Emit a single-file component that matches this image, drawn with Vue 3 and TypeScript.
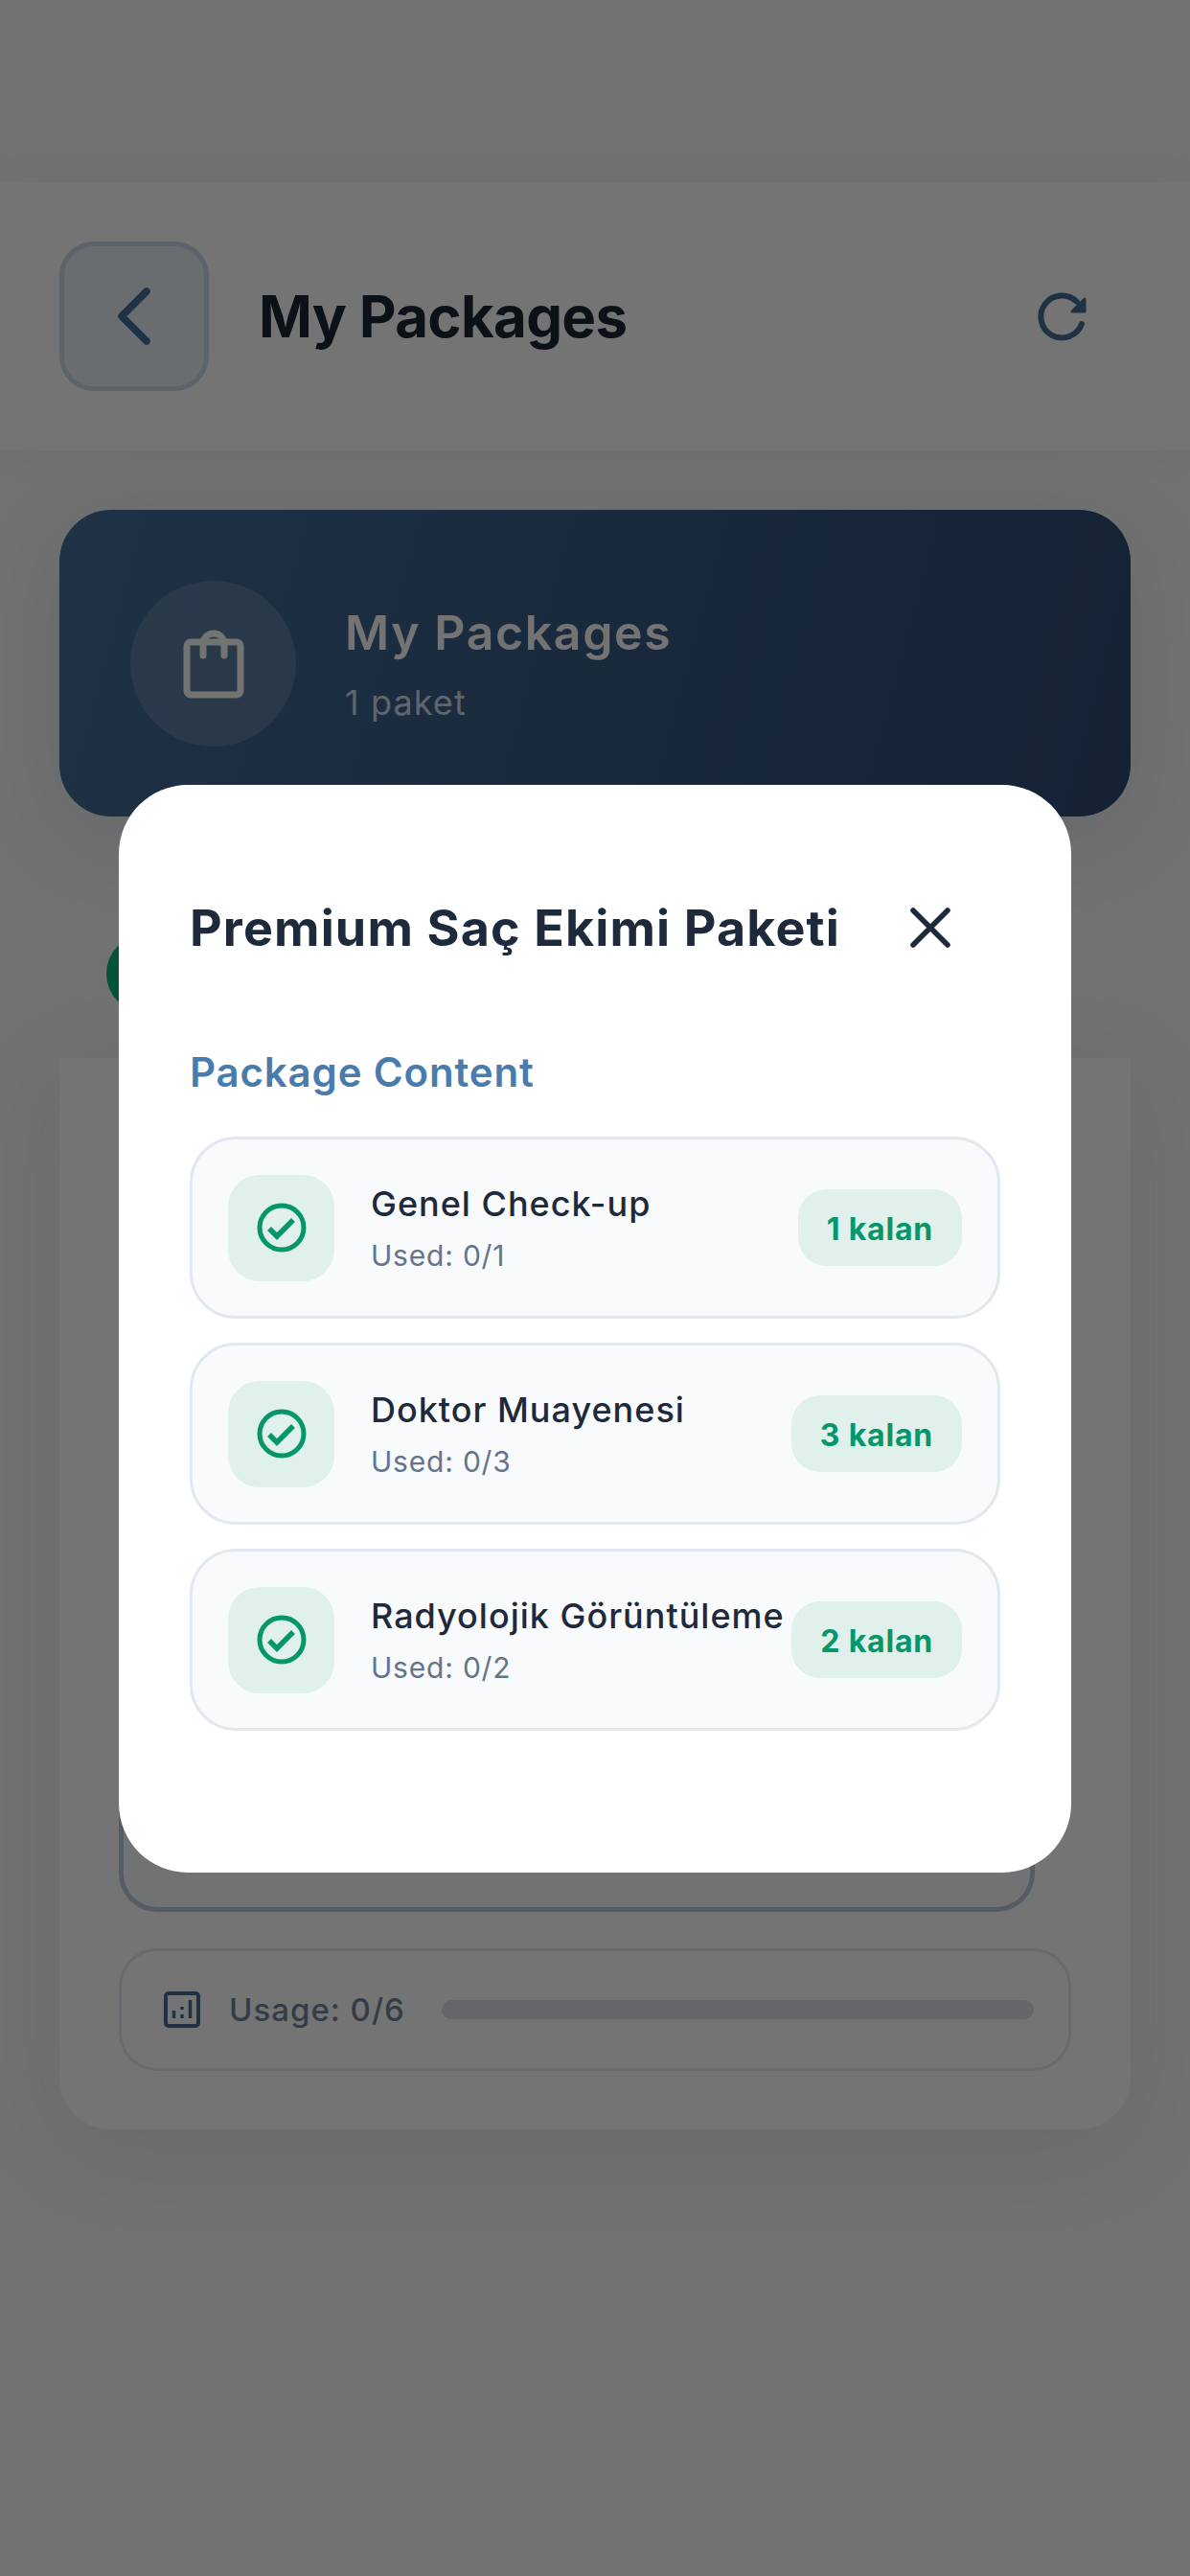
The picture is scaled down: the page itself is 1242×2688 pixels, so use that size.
<script setup lang="ts">
interface PackageItem {
  name: string;
  used: string;
  left: string;
}

const items: PackageItem[] = [
  { name: "Genel Check-up", used: "Used: 0/1", left: "1 kalan" },
  { name: "Doktor Muayenesi", used: "Used: 0/3", left: "3 kalan" },
  { name: "Radyolojik Görüntüleme", used: "Used: 0/2", left: "2 kalan" },
];
</script>

<template>
  <div class="page">
    <header class="top-bar">
      <button class="back-btn">
        <svg width="60" height="80" viewBox="0 0 60 80" fill="none">
          <path d="M43 14 17 40 43 66" stroke="#3c628a" stroke-width="7.5" stroke-linecap="round" stroke-linejoin="round" />
        </svg>
      </button>
      <h1 class="top-title">My Packages</h1>
      <svg class="refresh" width="60" height="60" viewBox="0 0 60 60" fill="none">
        <path d="M46 15A22 22 0 1 0 51 38" stroke="#3c628a" stroke-width="6" stroke-linecap="round" />
        <path d="M54 12V25H41Z" fill="#3c628a" stroke="#3c628a" stroke-width="3" stroke-linejoin="round" />
      </svg>
    </header>

    <main class="content">
      <section class="hero">
        <div class="hero-icon">
          <svg width="70" height="80" viewBox="0 0 70 80" fill="none" stroke="#e6e6e6" stroke-width="7" stroke-linecap="round" stroke-linejoin="round">
            <rect x="7" y="18" width="56" height="55" rx="4" />
            <path d="M24 32V20A11 11 0 0 1 46 20V32" />
          </svg>
        </div>
        <div>
          <div class="hero-title">My Packages</div>
          <div class="hero-sub">1 paket</div>
        </div>
      </section>

      <div class="status-row">
        <span class="status-dot"></span>
      </div>

      <section class="package-card">
        <div class="inner-box"></div>
        <div class="usage">
          <svg width="38" height="38" viewBox="0 0 38 38" fill="none">
            <rect x="2" y="2" width="34" height="34" rx="3" stroke="#3c628a" stroke-width="4" />
            <path d="M10.5 28V20M19 28V24M19 19V16M27.500 28V9" stroke="#3c628a" stroke-width="3.500" />
          </svg>
          <span class="usage-label">Usage: 0/6</span>
          <div class="usage-track"></div>
        </div>
      </section>
    </main>

    <div class="overlay">
      <div class="modal">
        <div class="modal-head">
          <h2 class="modal-title">Premium Saç Ekimi Paketi</h2>
          <svg class="close" width="46" height="46" viewBox="0 0 46 46" fill="none">
            <path d="M5 5 41 41M41 5 5 41" stroke="#1e293b" stroke-width="5.500" stroke-linecap="round" />
          </svg>
        </div>
        <h3 class="section-title">Package Content</h3>
        <ul class="item-list">
          <li v-for="item in items" :key="item.name" class="item">
            <div class="item-icon">
              <svg width="52" height="52" viewBox="0 0 52 52" fill="none" stroke="#059669" stroke-width="5">
                <circle cx="26" cy="26" r="23" />
                <path d="M13 27 21 35 38 18" stroke-width="5.500" />
              </svg>
            </div>
            <div class="item-text">
              <div class="item-name">{{ item.name }}</div>
              <div class="item-used">{{ item.used }}</div>
            </div>
            <span class="badge">{{ item.left }}</span>
          </li>
        </ul>
      </div>
    </div>
  </div>
</template>

<style scoped>
.page {
  position: relative;
  width: 1242px;
  height: 2688px;
  overflow: hidden;
  background: #e4e4e4;
  font-family: Inter, "Noto Sans", sans-serif;
}

.top-bar {
  display: flex;
  align-items: center;
  height: 280px;
  margin-top: 190px;
  padding: 0 77px 0 62px;
  box-sizing: border-box;
  background: #e8e8e8;
  box-shadow: 0 0 40px rgba(30, 58, 95, 0.05);
}

.back-btn {
  display: flex;
  align-items: center;
  justify-content: center;
  width: 156px;
  height: 156px;
  padding: 0;
  box-sizing: border-box;
  border: 5px solid #b8c6d4;
  border-radius: 36px;
  background: #d4dae0;
}

.top-title {
  flex: 1;
  margin: 0 0 0 52px;
  font-size: 60px;
  font-weight: 700;
  letter-spacing: -0.7px;
  color: #18202f;
}

.refresh {
  margin-right: 27px;
}

.content {
  padding: 62px 62px 0;
}

.hero {
  display: flex;
  align-items: center;
  gap: 51px;
  height: 320px;
  padding: 0 74px;
  box-sizing: border-box;
  border-radius: 54px;
  background: linear-gradient(105deg, #3e648c, #284468);
  box-shadow: 0 20px 90px rgba(30, 58, 95, 0.12);
}

.hero-icon {
  display: flex;
  align-items: center;
  justify-content: center;
  width: 173px;
  height: 173px;
  border-radius: 50%;
  background: rgba(255, 255, 255, 0.13);
}

.hero-title {
  font-size: 50px;
  font-weight: 600;
  letter-spacing: 1.6px;
  color: #e6e6e6;
}

.hero-sub {
  margin-top: 21px;
  font-size: 36px;
  letter-spacing: 1.1px;
  color: rgba(255, 255, 255, 0.7);
}

.status-row {
  display: flex;
  align-items: center;
  height: 252px;
  padding-left: 49px;
}

.status-dot {
  width: 82px;
  height: 82px;
  margin-top: 76px;
  border-radius: 50%;
  background: #0aa873;
}

.package-card {
  display: flex;
  flex-direction: column;
  height: 1118px;
  padding: 0 62px 61px;
  box-sizing: border-box;
  border-radius: 0 0 54px 54px;
  background: #e8e8e8;
  box-shadow: 0 20px 100px rgba(30, 58, 95, 0.1);
}

.inner-box {
  flex: 1;
  margin-right: 38px;
  margin-bottom: 38px;
  border: 5px solid #aab8c6;
  border-top: none;
  border-radius: 0 0 40px 40px;
  background: #e2e4e6;
}

.usage {
  display: flex;
  align-items: center;
  height: 128px;
  padding: 0 36px 0 44px;
  box-sizing: border-box;
  border: 3px solid #d0d4da;
  border-radius: 40px;
}

.usage-label {
  margin-left: 30px;
  font-size: 33px;
  font-weight: 500;
  letter-spacing: 1px;
  color: #66788f;
}

.usage-track {
  flex: 1;
  height: 20px;
  margin-left: 38px;
  border-radius: 10px;
  background: #c8ccd4;
}

.overlay {
  position: absolute;
  inset: 0;
  padding: 819px 124px 0;
  box-sizing: border-box;
  background: rgba(0, 0, 0, 0.5);
}

.modal {
  height: 1135px;
  padding: 76px 74px 0;
  box-sizing: border-box;
  border-radius: 72px;
  background: #fff;
}

.modal-head {
  display: flex;
  align-items: center;
  justify-content: space-between;
  height: 146px;
  padding-right: 50px;
}

.modal-title {
  margin: 0;
  font-size: 52px;
  font-weight: 700;
  letter-spacing: 1.15px;
  color: #1e293b;
}

.section-title {
  margin: 53px 0 42px;
  font-size: 42px;
  line-height: 50px;
  font-weight: 600;
  letter-spacing: 0.85px;
  color: #4a7bad;
}

.item-list {
  display: flex;
  flex-direction: column;
  gap: 25px;
  margin: 0;
  padding: 0;
  list-style: none;
}

.item {
  display: flex;
  align-items: center;
  height: 190px;
  padding: 0 37px;
  box-sizing: border-box;
  border: 3px solid #e2e8f0;
  border-radius: 48px;
  background: #f8fafc;
}

.item-icon {
  display: flex;
  align-items: center;
  justify-content: center;
  flex-shrink: 0;
  width: 111px;
  height: 111px;
  border-radius: 33px;
  background: #e0f0eb;
}

.item-text {
  flex: 1;
  min-width: 0;
  margin-left: 38px;
  white-space: nowrap;
}

.item-name {
  font-size: 36px;
  font-weight: 500;
  letter-spacing: 1px;
  color: #1e293b;
}

.item-used {
  margin-top: 14px;
  font-size: 30px;
  letter-spacing: 0.8px;
  color: #64748b;
}

.badge {
  flex-shrink: 0;
  padding: 0 30px;
  height: 80px;
  line-height: 84px;
  border-radius: 30px;
  background: #e0f0eb;
  font-size: 32px;
  font-weight: 700;
  letter-spacing: 0.8px;
  color: #059669;
}
</style>
